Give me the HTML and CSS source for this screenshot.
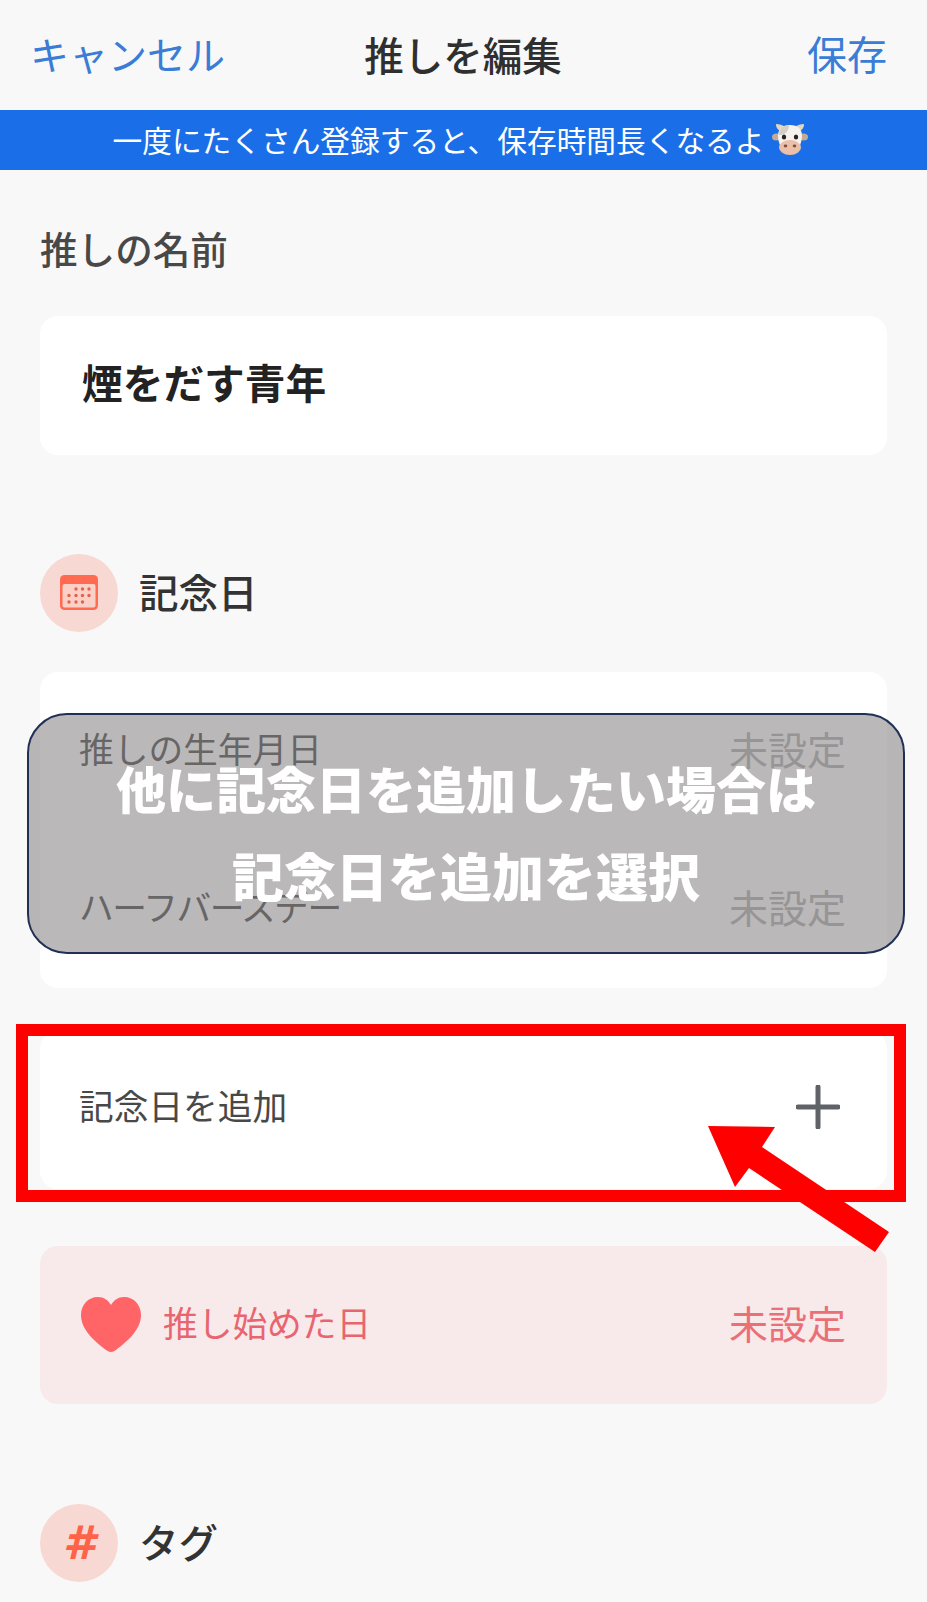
FILE: index.html
```html
<!DOCTYPE html>
<html lang="ja">
<head>
	<meta charset="utf-8">
	<meta name="viewport" content="width=device-width, initial-scale=1">
	<title>推しを編集</title>
	<link rel="stylesheet" href="styles.css">
</head>
<body>
	<div class="page">
		<header class="nav">
			<span class="nav-cancel">キャンセル</span>
			<span class="nav-title">推しを編集</span>
			<span class="nav-save">保存</span>
		</header>
		<div class="banner">
			<span>一度にたくさん登録すると、保存時間長くなるよ</span>
			<svg class="cow" viewBox="0 0 36 32" aria-hidden="true">
				<path d="M9 8C6 7 4 5 4 1c3 0 7 1 9 3z" fill="#e2d6bd"/>
				<path d="M27 8c3-1 5-3 5-7-3 0-7 1-9 3z" fill="#e2d6bd"/>
				<ellipse cx="4.500" cy="14" rx="4.500" ry="3.500" fill="#c4ab94"/>
				<ellipse cx="31.500" cy="14" rx="4.500" ry="3.500" fill="#c4ab94"/>
				<path d="M18 2c8 0 12 4 12 11 0 5-2 9-3 12H9C8 22 6 18 6 13 6 6 10 2 18 2z" fill="#f6f3ee"/>
				<path d="M9 5c3-2 6-3 8-2 0 4-3 9-10 9 0-3 1-5 2-7z" fill="#d5cfc6"/>
				<ellipse cx="12" cy="14" rx="2.200" ry="2.600" fill="#2b2320"/>
				<ellipse cx="24" cy="14" rx="2.200" ry="2.600" fill="#2b2320"/>
				<ellipse cx="18" cy="24.500" rx="11" ry="7.500" fill="#ecbfa8"/>
				<ellipse cx="13.500" cy="23" rx="1.800" ry="1.400" fill="#7e5142"/>
				<ellipse cx="22.500" cy="23" rx="1.800" ry="1.400" fill="#7e5142"/>
			</svg>
		</div>
		<main class="content">
			<div class="field-label">推しの名前</div>
			<div class="card name-card"><span class="name-text">煙をだす青年</span></div>

			<div class="section-head anniv-head">
				<span class="circle">
					<svg class="cal" viewBox="0 0 38 35" aria-hidden="true">
						<rect x="0" y="0" width="38" height="35" rx="4.500" fill="#ff6a50"/>
						<rect x="2.500" y="9" width="33" height="23.500" rx="2" fill="#fbd0c6"/>
						<g fill="#e4604f">
							<circle cx="16" cy="14" r="1.700"/><circle cx="22.500" cy="14" r="1.700"/><circle cx="29" cy="14" r="1.700"/>
							<circle cx="9" cy="20.500" r="1.700"/><circle cx="16" cy="20.500" r="1.700"/><circle cx="22.500" cy="20.500" r="1.700"/><circle cx="29" cy="20.500" r="1.700"/>
							<circle cx="9" cy="27" r="1.700"/><circle cx="16" cy="27" r="1.700"/><circle cx="22.500" cy="27" r="1.700"/>
						</g>
					</svg>
				</span>
				<span class="head-text">記念日</span>
			</div>
			<div class="card anniv-card">
				<div class="row"><span>推しの生年月日</span><span class="unset">未設定</span></div>
				<div class="row"><span class="half">ハーフバースデー</span><span class="unset">未設定</span></div>
			</div>
			<div class="card row add-card">
				<span>記念日を追加</span>
				<svg class="plus" viewBox="0 0 44 44" aria-hidden="true">
					<path d="M22 2v40M2 22h40" stroke="#5f6368" stroke-width="5" stroke-linecap="round" fill="none"/>
				</svg>
			</div>
			<div class="card row start-card">
				<span class="start-left">
					<svg class="heart" viewBox="0 0 60 56" aria-hidden="true">
						<path d="M30 55c-2 0-3-1-5-2C12 43 0 32 0 18 0 8 7 0 17 0c6 0 10 3 13 8 3-5 7-8 13-8 10 0 17 8 17 18 0 14-12 25-25 35-2 1-3 2-5 2z" fill="#ff6467"/>
					</svg>
					<span>推し始めた日</span>
				</span>
				<span class="unset start-unset">未設定</span>
			</div>

			<div class="section-head tag-head">
				<span class="circle"><span class="hash">#</span></span>
				<span class="head-text">タグ</span>
			</div>
		</main>

		<div class="notice">
			<div>他に記念日を追加したい場合は</div>
			<div class="notice-second">記念日を追加を選択</div>
		</div>
		<div class="red-box"></div>
		<svg class="arrow" viewBox="0 0 200 140" aria-hidden="true">
			<polygon points="8,6 75,7 62,27 189,112 175,132 49,48 35,67" fill="#ff0000"/>
		</svg>
	</div>
</body>
</html>
```

FILE: styles.css
```css
* {
	box-sizing: border-box;
}

body {
	margin: 0;
	background: #f8f8f8;
	font-family: "Noto Sans CJK JP", "Noto Sans", sans-serif;
	color: #333;
}

.page {
	position: relative;
	width: 927px;
	height: 1602px;
	overflow: hidden;
}

.nav {
	display: grid;
	grid-template-columns: 1fr auto 1fr;
	align-items: center;
	height: 110px;
	padding: 0 40px 4px 30px;
}
.nav-cancel, .nav-save {
	font-size: 39px;
	color: #3a7cd6;
}
.nav-save {
	text-align: right;
	font-size: 40px;
}
.nav-title {
	margin-left: 9px;
	font-size: 39.500px;
	font-weight: 500;
	color: #2f2f2f;
}

.banner {
	display: flex;
	align-items: center;
	justify-content: center;
	gap: 8px;
	height: 60px;
	padding: 0 6px 2px 0;
	background: #1a6fe8;
	color: #fff;
	font-size: 29.700px;
}
.cow {
	width: 36px;
	height: 32px;
}

.content {
	padding: 0 40px;
}

.field-label {
	margin-top: 53px;
	font-size: 37.600px;
	font-weight: 500;
	line-height: 50px;
	color: #484848;
}

.card {
	border-radius: 18px;
	background: #fff;
}
.name-card {
	display: flex;
	align-items: center;
	height: 139px;
	margin-top: 43px;
	padding: 0 0 8px 42px;
	font-size: 40.700px;
	font-weight: 700;
	color: #222;
}

.section-head {
	display: flex;
	align-items: center;
	gap: 21px;
	height: 79px;
	font-size: 39.500px;
	font-weight: 500;
	color: #333;
}
.head-text {
	margin-bottom: 5px;
}
.anniv-head {
	margin-top: 98px;
}
.tag-head {
	margin-top: 99px;
}
.circle {
	display: flex;
	align-items: center;
	justify-content: center;
	width: 78px;
	height: 78px;
	border-radius: 50%;
	background: #f8d8d2;
}
.cal {
	width: 38px;
	height: 35px;
}
.hash {
	font-family: "DejaVu Sans", sans-serif;
	font-size: 46px;
	font-weight: 700;
	font-style: italic;
	line-height: 1;
	color: #ff6347;
}

.anniv-card {
	margin-top: 40px;
}
.row {
	display: flex;
	align-items: center;
	justify-content: space-between;
	height: 158px;
	padding: 0 41px 6px 39px;
	font-size: 34.700px;
	color: #484848;
}
.half {
	letter-spacing: -1.500px;
}
.unset {
	font-size: 39px;
	color: #b0b0b0;
}
.add-card {
	margin-top: 43px;
	padding-bottom: 10px;
}
.plus {
	width: 44px;
	height: 44px;
	margin: 4px 6px 0 0;
}
.start-card {
	margin-top: 57px;
	background: #f8e9ea;
	color: #e8656f;
}
.start-left {
	display: flex;
	align-items: center;
	gap: 22px;
}
.start-unset {
	color: #ea7077;
}
.heart {
	width: 60px;
	height: 56px;
	margin: 6px 0 0 2px;
}

/* annotations drawn over the screenshot */
.notice {
	position: absolute;
	left: 27px;
	top: 713px;
	display: flex;
	flex-direction: column;
	align-items: center;
	justify-content: center;
	width: 878px;
	height: 241px;
	padding-bottom: 5px;
	border: 2px solid #1f2f55;
	border-radius: 40px;
	background: rgba(129, 125, 127, 0.55);
	color: #fff;
	font-size: 50px;
	font-weight: 900;
	line-height: 88px;
}
.notice-second {
	font-size: 52px;
}
.red-box {
	position: absolute;
	left: 16px;
	top: 1024px;
	width: 890px;
	height: 178px;
	border: 12px solid #ff0000;
}
.arrow {
	position: absolute;
	left: 700px;
	top: 1120px;
	width: 200px;
	height: 140px;
}
```
